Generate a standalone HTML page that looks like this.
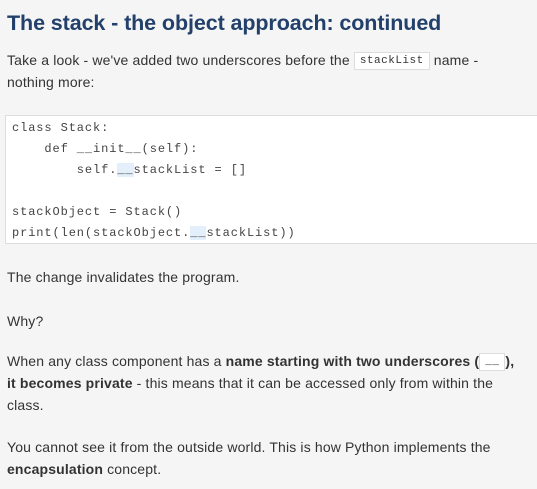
<!DOCTYPE html>
<html><head><style>
body{margin:0;background:#f5f5f5;width:537px;height:489px;overflow:hidden;font-family:"Liberation Sans",sans-serif;color:#333;}
h1{position:absolute;left:7px;top:11px;margin:0;font-size:21.5px;color:#22406a;font-weight:bold;letter-spacing:-0.1px;}
p{position:absolute;left:7px;margin:0;font-size:14px;line-height:22px;width:530px;letter-spacing:0.15px;}
code.i{font-family:"Liberation Mono",monospace;font-size:11px;line-height:14px;background:#fff;border:1px solid #ddd;padding:1px 5px;letter-spacing:0.5px;display:inline-block;vertical-align:middle;}
pre{position:absolute;left:5px;top:115px;width:540px;height:129px;margin:0;background:#fff;border:1px solid #ddd;box-sizing:border-box;padding:2px 6px;font-family:"Liberation Mono",monospace;font-size:12px;letter-spacing:0.9px;line-height:21px;color:#444;}
.h{background:#e3f0fc;}
</style></head><body>
<h1>The stack - the object approach: continued</h1>
<p style="top:49px">Take a look - we've added two underscores before the <code class="i">stackList</code> name -<br>nothing more:</p>
<pre>class Stack:
    def __init__(self):
        self.<span class="h">__</span>stackList = []

stackObject = Stack()
print(len(stackObject.<span class="h">__</span>stackList))</pre>
<p style="top:266px">The change invalidates the program.</p>
<p style="top:310px">Why?</p>
<p style="top:350px">When any class component has a <b>name starting with two underscores (<code class="i" style="font-weight:normal">__</code>),<br>it becomes private</b> - this means that it can be accessed only from within the<br>class.</p>
<p style="top:436px">You cannot see it from the outside world. This is how Python implements the<br><b>encapsulation</b> concept.</p>
</body></html>
